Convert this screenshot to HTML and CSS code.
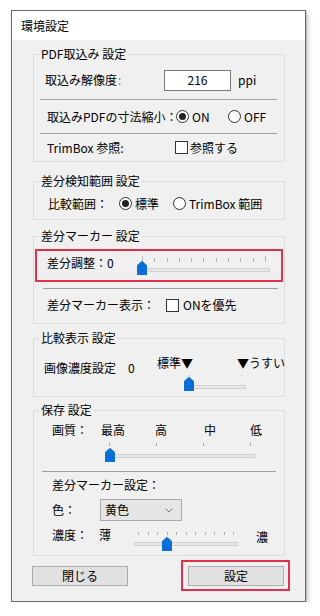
FILE: index.html
```html
<!DOCTYPE html>
<html lang="ja">
<head>
<meta charset="utf-8">
<title>環境設定</title>
<link rel="stylesheet" href="styles.css">
</head>
<body>
<div class="window">
  <div class="titlebar">環境設定</div>
  <div class="client">

    <fieldset class="group g-pdf">
      <legend>PDF取込み 設定</legend>
      <div class="row row-res">
        <span class="lbl w-res">取込み解像度<span class="dim">:</span></span>
        <span class="textbox">216</span>
        <span class="unit">ppi</span>
      </div>
      <div class="sep sep-pdf"></div>
      <div class="row row-shrink">
        <span class="lbl w-shrink">取込みPDFの寸法縮小：</span>
        <span class="opt w-on"><span class="radio checked"></span>ON</span>
        <span class="opt"><span class="radio"></span>OFF</span>
      </div>
      <div class="sep sep-pdf"></div>
      <div class="row row-trim">
        <span class="lbl w-trim">TrimBox 参照:</span>
        <span class="opt"><span class="check"></span>参照する</span>
      </div>
    </fieldset>

    <fieldset class="group g-range">
      <legend>差分検知範囲 設定</legend>
      <div class="row row-range">
        <span class="lbl w-range">比較範囲：</span>
        <span class="opt w-std"><span class="radio checked"></span>標準</span>
        <span class="opt"><span class="radio"></span>TrimBox 範囲</span>
      </div>
    </fieldset>

    <fieldset class="group g-marker">
      <legend>差分マーカー 設定</legend>
      <div class="highlight">
        <span class="lbl w-adjust">差分調整：0</span>
        <div class="slider s-adjust">
          <div class="ticks">
            <i class="tick tall"></i><i class="tick"></i><i class="tick"></i><i class="tick"></i><i class="tick"></i><i class="tick"></i><i class="tick"></i><i class="tick"></i><i class="tick"></i><i class="tick"></i><i class="tick tall"></i>
          </div>
          <div class="track"></div>
          <svg class="thumb" viewBox="0 0 10 14" width="10" height="14"><path d="M0 4.2 L4.2 0.4 Q5 -0.2 5.8 0.4 L10 4.2 V14 H0 Z"/></svg>
        </div>
      </div>
      <div class="sep sep-marker"></div>
      <div class="row row-mshow">
        <span class="lbl w-mshow">差分マーカー表示：</span>
        <span class="opt"><span class="check wide"></span>ONを優先</span>
      </div>
    </fieldset>

    <fieldset class="group g-view">
      <legend>比較表示 設定</legend>
      <div class="view-body">
        <span class="lbl view-lbl">画像濃度設定<span class="zero">0</span></span>
        <div class="view-right">
          <div class="view-marks"><span class="w-mark">標準▼</span><span>▼うすい</span></div>
          <div class="slider s-view">
            <div class="ticks">
              <i class="tick"></i><i class="tick"></i><i class="tick"></i><i class="tick"></i>
            </div>
            <div class="track"></div>
            <svg class="thumb" viewBox="0 0 10 14" width="10" height="14"><path d="M0 4.2 L4.2 0.4 Q5 -0.2 5.8 0.4 L10 4.2 V14 H0 Z"/></svg>
          </div>
        </div>
      </div>
    </fieldset>

    <fieldset class="group g-save">
      <legend>保存 設定</legend>
      <div class="quality-labels">
        <span>画質：</span><span>最高</span><span>高</span><span>中</span><span>低</span>
      </div>
      <div class="slider s-quality">
        <div class="ticks">
          <i class="tick"></i><i class="tick"></i><i class="tick"></i><i class="tick"></i>
        </div>
        <div class="track"></div>
        <svg class="thumb" viewBox="0 0 10 14" width="10" height="14"><path d="M0 4.2 L4.2 0.4 Q5 -0.2 5.8 0.4 L10 4.2 V14 H0 Z"/></svg>
      </div>
      <div class="sep sep-save"></div>
      <div class="marker-title">差分マーカー設定：</div>
      <div class="row row-color">
        <span class="lbl w-color">色：</span>
        <span class="select">黄色<svg class="chev" viewBox="0 0 8 5" width="8" height="5"><polyline points="0.5,0.5 4,4 7.5,0.5"/></svg></span>
      </div>
      <div class="row-density">
        <span class="lbl w-dens">濃度：</span>
        <span class="lbl w-thin">薄</span>
        <div class="slider s-density">
          <div class="ticks">
            <i class="tick"></i><i class="tick"></i><i class="tick"></i><i class="tick"></i><i class="tick"></i><i class="tick"></i><i class="tick"></i><i class="tick"></i><i class="tick"></i><i class="tick"></i><i class="tick"></i>
          </div>
          <div class="track"></div>
          <svg class="thumb" viewBox="0 0 10 14" width="10" height="14"><path d="M0 4.2 L4.2 0.4 Q5 -0.2 5.8 0.4 L10 4.2 V14 H0 Z"/></svg>
        </div>
        <span class="lbl thick">濃</span>
      </div>
    </fieldset>

    <div class="buttons">
      <button class="btn btn-close" type="button">閉じる</button>
      <div class="btn-mark"><button class="btn" type="button">設定</button></div>
    </div>

  </div>
</div>
</body>
</html>
```

FILE: styles.css
```css
* { box-sizing: border-box; }
html, body { margin: 0; padding: 0; background: #ffffff; }
body {
  font-family: "Noto Sans CJK JP", "Noto Sans", sans-serif;
  font-size: 12px;
  line-height: 14px;
  color: #000;
}

.window {
  margin: 10px 0 0 11px;
  width: 295px;
  height: 592px;
  border: 1px solid #6b6b6b;
  background: #f0f0f0;
  box-shadow: 1px 1px 0 rgba(0,0,0,0.12), 2px 3px 5px rgba(0,0,0,0.22);
  display: flex;
  flex-direction: column;
}
.titlebar {
  height: 29px;
  background: #ffffff;
  padding-left: 9px;
  display: flex;
  align-items: center;
}
.client {
  flex: 1;
  padding: 7px 20px 0 21px;
}

/* group boxes */
fieldset.group {
  margin: 0;
  padding: 0;
  border: 1px solid #dcdcdc;
  min-inline-size: 0;
}
legend {
  margin-left: 5px;
  padding: 0 2px;
  height: 14px;
  line-height: 14px;
  white-space: nowrap;
}
fieldset.g-range { margin-top: 12px; }
fieldset.g-marker { margin-top: 9px; }
fieldset.g-view { margin-top: 7px; }
fieldset.g-save { margin-top: 6px; }

.row { display: flex; align-items: center; }
.lbl { flex: none; white-space: nowrap; }
.opt { display: flex; align-items: center; flex: none; white-space: nowrap; }

.sep { height: 1px; background: #a0a0a0; }
.sep-pdf { margin: 0 7px 0 6px; }
.sep-marker { margin: 6px 6px 0 9px; }
.sep-save { margin: 9px 8px 0 8px; }

/* controls */
.textbox {
  width: 67px;
  height: 21px;
  background: #fff;
  border: 1px solid #7a7a7a;
  display: flex;
  align-items: center;
  justify-content: center;
  flex: none;
}
.dim { color: #b07a50; margin-left: 1px; }
.unit { margin-left: 7px; }
.radio {
  width: 13px;
  height: 13px;
  border: 1px solid #333;
  border-radius: 50%;
  background: #fff;
  margin-right: 3px;
  display: flex;
  align-items: center;
  justify-content: center;
  flex: none;
}
.radio.checked::after {
  content: "";
  width: 7px;
  height: 7px;
  border-radius: 50%;
  background: #222;
}
.check {
  width: 13px;
  height: 13px;
  border: 1px solid #333;
  background: #fff;
  margin-right: 2px;
  flex: none;
}
.check.wide { margin-right: 4px; }

/* group 1 */
.row-res { height: 38px; padding-left: 11px; }
.w-res { width: 119px; }
.row-shrink { height: 33px; padding-left: 13px; }
.w-shrink { width: 129px; }
.w-on { width: 52px; }
.row-trim { height: 27px; padding-left: 13px; }
.w-trim { width: 128px; }

/* group 2 */
.row-range { height: 31px; padding-left: 14px; }
.w-range { width: 71px; }
.w-std { width: 54px; }

/* group 3 */
.highlight {
  margin: 6px 1px 0 1px;
  height: 33px;
  border: 2px solid #e0324a;
  display: flex;
  align-items: flex-start;
  padding-left: 10px;
}
.w-adjust { width: 90px; margin-top: 5px; }
.row-mshow { height: 32px; padding-left: 13px; margin-bottom: 2px; }
.w-mshow { width: 119px; }

/* sliders */
.slider { position: relative; flex: none; display: flex; flex-direction: column; }
.ticks { display: flex; justify-content: space-between; align-items: flex-end; }
.tick { display: block; width: 1px; background: #a8a8a8; }
.track {
  height: 4px;
  background: #e7e7e7;
  border: 1px solid #d2d2d2;
}
.thumb { position: absolute; left: 0; fill: #0a6ed6; }

.s-adjust { width: 133px; height: 24px; }
.s-adjust .ticks { margin-top: 5px; height: 6px; padding: 0 4px 0 5px; }
.s-adjust .tick { height: 4px; background: #b4b4b4; }
.s-adjust .tick.tall { height: 6px; }
.s-adjust .track { margin-top: 6px; }
.s-adjust .thumb { top: 10px; }

/* group 4 */
.view-body { display: flex; padding-left: 10px; }
.view-lbl { width: 113px; margin-top: 16px; }
.zero { margin-left: 12px; }
.view-right { margin-top: 11px; padding-bottom: 4px; width: 132px; flex: none; }
.view-marks { display: flex; white-space: nowrap; height: 14px; }
.w-mark { width: 80px; flex: none; }
.s-view { margin: 3px 0 0 27px; width: 62px; height: 19px; }
.s-view .ticks { margin-top: 2px; height: 2px; padding: 0 4px 0 5px; }
.s-view .tick { height: 2px; background: #cfcfcf; }
.s-view .track { margin-top: 8px; }
.s-view .thumb { top: 4px; }

/* group 5 */
.quality-labels {
  display: grid;
  grid-template-columns: 49px 54px 49px 46px auto;
  margin-top: 6px;
  padding-left: 18px;
}
.s-quality { margin: 4px 0 0 71px; width: 150px; height: 21px; }
.s-quality .ticks { margin-top: 2px; height: 3px; padding: 0 4px 0 4px; }
.s-quality .tick { height: 3px; }
.s-quality .track { margin-top: 8px; }
.s-quality .thumb { top: 7px; }

.marker-title { margin-top: 6px; padding-left: 18px; }
.row-color { margin-top: 7px; padding-left: 18px; height: 22px; }
.w-color { width: 48px; }
.select {
  width: 82px;
  height: 22px;
  background: #e5e5e5;
  border: 1px solid #acacac;
  display: flex;
  align-items: center;
  justify-content: space-between;
  padding: 0 8px 0 4px;
}
.chev { fill: none; stroke: #7a7a7a; stroke-width: 1; }

.row-density { display: flex; height: 30px; margin-top: 4px; padding-left: 18px; }
.w-dens { width: 47px; margin-top: 3px; }
.w-thin { width: 35px; margin-top: 3px; }
.s-density { margin-top: 5px; width: 104px; height: 20px; }
.s-density .ticks { margin-top: 2px; height: 3px; padding: 0 4px; }
.s-density .tick { height: 3px; background: #b0b0b0; }
.s-density .track { margin-top: 7px; }
.s-density .thumb { top: 7px; left: 28px; }
.thick { margin: 5px 0 0 18px; }

/* buttons */
.buttons {
  display: flex;
  justify-content: space-between;
  align-items: flex-start;
  margin: 10px -5px 0 -1px;
}
.btn {
  width: 96px;
  height: 20px;
  margin: 0;
  padding: 0;
  background: #e1e1e1;
  border: 1px solid #adadad;
  font-family: inherit;
  font-size: 12px;
  line-height: 14px;
  color: #000;
  display: flex;
  align-items: center;
  justify-content: center;
}
.btn-mark {
  border: 2px solid #e0324a;
  padding: 4px 4px 3px 5px;
  margin-top: -6px;
}
```
